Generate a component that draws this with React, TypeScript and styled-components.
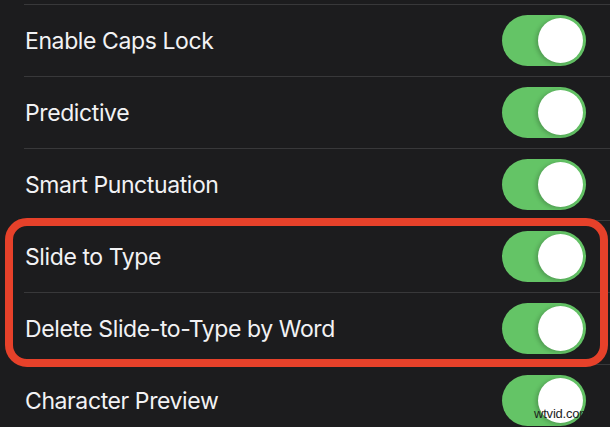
import React from 'react';
import styled, { createGlobalStyle } from 'styled-components';

const GlobalStyle = createGlobalStyle`
  html, body {
    margin: 0;
    padding: 0;
    background: #1c1c1e;
  }
  body {
    font-family: Inter, "Noto Sans", "Liberation Sans", sans-serif;
    -webkit-font-smoothing: antialiased;
  }
`;

const Screen = styled.div`
  position: relative;
  width: 610px;
  height: 427px;
  overflow: hidden;
  background: #1c1c1e;
  padding-top: 4px;
  box-sizing: border-box;
`;

const List = styled.div`
  display: flex;
  flex-direction: column;
`;

const Row = styled.div`
  display: flex;
  align-items: center;
  justify-content: space-between;
  height: 72px;
  box-sizing: border-box;
  margin-left: 24px;
  padding-right: 24px;
  border-top: 1px solid #38383a;
`;

const Label = styled.span`
  color: #f2f2f4;
  font-size: 23px;
  font-weight: 400;
  letter-spacing: -0.4px;
  padding-left: 1px;
`;

const Track = styled.div<{ $on: boolean }>`
  position: relative;
  width: 84px;
  height: 51px;
  border-radius: 26px;
  background: ${(p) => (p.$on ? '#64c466' : '#39393d')};
  flex-shrink: 0;
`;

const Knob = styled.div<{ $on: boolean }>`
  position: absolute;
  top: 3px;
  ${(p) => (p.$on ? 'right: 3px;' : 'left: 3px;')}
  width: 45px;
  height: 45px;
  border-radius: 50%;
  background: #ffffff;
  box-shadow: -2px 1px 4px rgba(0, 0, 0, 0.22);
`;

const Highlight = styled.div`
  position: relative;

  &::after {
    content: '';
    position: absolute;
    top: -2px;
    bottom: -3px;
    left: 5px;
    right: 2px;
    border: 8px solid #e6412a;
    border-radius: 22px;
    pointer-events: none;
  }
`;

const Watermark = styled.span`
  position: absolute;
  right: 20px;
  bottom: 6px;
  font-family: "Liberation Sans", Arial, sans-serif;
  font-size: 13px;
  color: #1e1e1e;
  letter-spacing: -0.2px;
`;

const Toggle: React.FC<{ on?: boolean }> = ({ on = true }) => (
  <Track $on={on}>
    <Knob $on={on} />
  </Track>
);

const Setting: React.FC<{ label: string }> = ({ label }) => (
  <Row>
    <Label>{label}</Label>
    <Toggle />
  </Row>
);

const App: React.FC = () => {
  return (
    <>
      <GlobalStyle />
      <Screen>
        <List>
          <Setting label="Enable Caps Lock" />
          <Setting label="Predictive" />
          <Setting label="Smart Punctuation" />
          <Highlight>
            <Setting label="Slide to Type" />
            <Setting label="Delete Slide-to-Type by Word" />
          </Highlight>
          <Setting label="Character Preview" />
        </List>
        <Watermark>wtvid.com</Watermark>
      </Screen>
    </>
  );
};

export default App;
